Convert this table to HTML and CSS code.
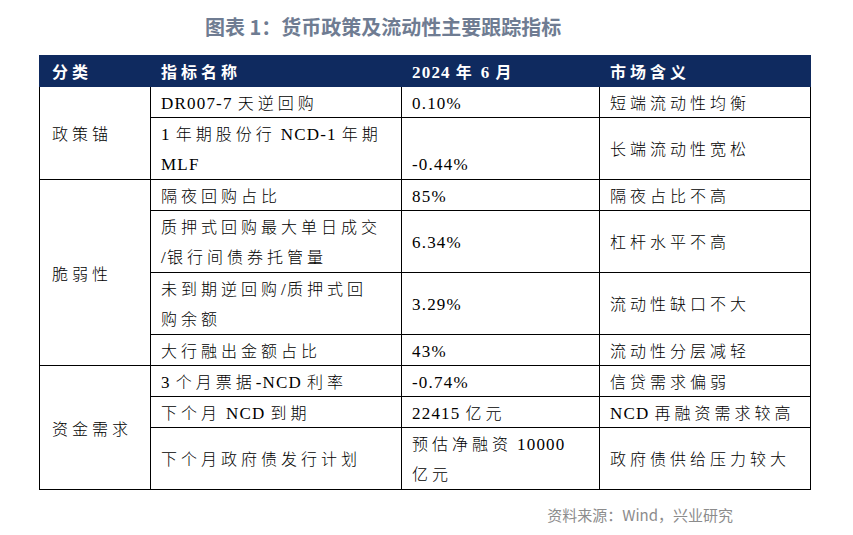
FILE: index.html
```html
<!DOCTYPE html>
<html lang="zh-CN">
<head>
<meta charset="utf-8">
<title>货币政策及流动性主要跟踪指标</title>
<link rel="stylesheet" href="styles.css">
</head>
<body>
<div class="page">
  <h1 class="title">图表 1：货币政策及流动性主要跟踪指标</h1>
  <table class="grid">
    <colgroup>
      <col class="c1"><col class="c2"><col class="c3"><col class="c4">
    </colgroup>
    <thead>
      <tr>
        <th class="first">分类</th>
        <th>指标名称</th>
        <th><span class="l b">2024</span>年<span class="l a b">6</span>月</th>
        <th>市场含义</th>
      </tr>
    </thead>
    <tbody>
      <tr>
        <td class="first mid" rowspan="2">政策锚</td>
        <td><span class="l b">DR007-7</span>天逆回购</td>
        <td><span class="l">0.10%</span></td>
        <td>短端流动性均衡</td>
      </tr>
      <tr class="two">
        <td><span class="l b">1</span>年期股份行<span class="l a b">NCD-1</span>年期<br><span class="l">MLF</span></td>
        <td class="bottom"><span class="l">-0.44%</span></td>
        <td>长端流动性宽松</td>
      </tr>
      <tr>
        <td class="first mid" rowspan="4">脆弱性</td>
        <td>隔夜回购占比</td>
        <td><span class="l">85%</span></td>
        <td>隔夜占比不高</td>
      </tr>
      <tr class="two">
        <td>质押式回购最大单日成交<br><span class="l">/</span>银行间债券托管量</td>
        <td><span class="l">6.34%</span></td>
        <td>杠杆水平不高</td>
      </tr>
      <tr class="two">
        <td>未到期逆回购<span class="l">/</span>质押式回<br>购余额</td>
        <td><span class="l">3.29%</span></td>
        <td>流动性缺口不大</td>
      </tr>
      <tr>
        <td>大行融出金额占比</td>
        <td><span class="l">43%</span></td>
        <td>流动性分层减轻</td>
      </tr>
      <tr>
        <td class="first mid" rowspan="3">资金需求</td>
        <td><span class="l b">3</span>个月票据<span class="l b">-NCD</span>利率</td>
        <td><span class="l">-0.74%</span></td>
        <td>信贷需求偏弱</td>
      </tr>
      <tr>
        <td>下个月<span class="l a b">NCD</span>到期</td>
        <td><span class="l b">22415</span>亿元</td>
        <td><span class="l b">NCD</span>再融资需求较高</td>
      </tr>
      <tr class="two">
        <td>下个月政府债发行计划</td>
        <td>预估净融资<span class="l a">10000</span><br>亿元</td>
        <td>政府债供给压力较大</td>
      </tr>
    </tbody>
  </table>
  <p class="source">资料来源：Wind，兴业研究</p>
</div>
</body>
</html>
```

FILE: styles.css
```css
html, body {
  margin: 0;
  padding: 0;
  background: #ffffff;
}

.page {
  width: 853px;
  height: 535px;
  overflow: hidden;
}

.title {
  margin: 0;
  padding: 12px 0 13px 205px;
  height: 30px;
  line-height: 30px;
  font-family: "Noto Sans CJK SC", "Noto Sans", sans-serif;
  font-size: 20px;
  font-weight: 700;
  color: #6f7c92;
  white-space: nowrap;
}

.grid {
  margin-left: 39px;
  width: 771px;
  border-collapse: collapse;
  table-layout: fixed;
  font-family: "Noto Sans CJK SC", serif;
  font-size: 16px;
  font-weight: 300;
  color: #000000;
  letter-spacing: 4px;
}

.c1 { width: 111px; }
.c2 { width: 251px; }
.c3 { width: 198px; }
.c4 { width: 211px; }

.grid th {
  background: #0f2a5f;
  color: #ffffff;
  font-weight: 700;
  text-align: left;
  height: 30px;
  line-height: 30px;
  padding: 0 0 0 10px;
  border: 1px solid #0f2a5f;
  border-left-color: #5a6a8c;
  white-space: nowrap;
}

.grid th:first-child {
  border-left-color: #0f2a5f;
}

.grid td {
  border: 1px solid #000000;
  line-height: 30px;
  padding: 0 0 0 10px;
  vertical-align: middle;
  white-space: nowrap;
}

.grid tr.two td {
  padding-bottom: 1px;
}

.grid .first {
  padding-left: 12px;
}

.grid td.bottom {
  vertical-align: bottom;
}

.l {
  font-family: "Liberation Serif", "Times New Roman", serif;
  font-size: 17px;
  line-height: 1;
  font-weight: 400;
  letter-spacing: 1.2px;
}

.grid th .l {
  font-weight: 700;
}

.l.a {
  margin-left: 5px;
}

.l.b {
  margin-right: 5px;
}

.source {
  margin: 14px 0 0;
  padding-right: 120px;
  text-align: right;
  font-family: "Noto Sans CJK SC", "Noto Sans", sans-serif;
  font-size: 15px;
  line-height: 22px;
  color: #8c8c8c;
}
```
